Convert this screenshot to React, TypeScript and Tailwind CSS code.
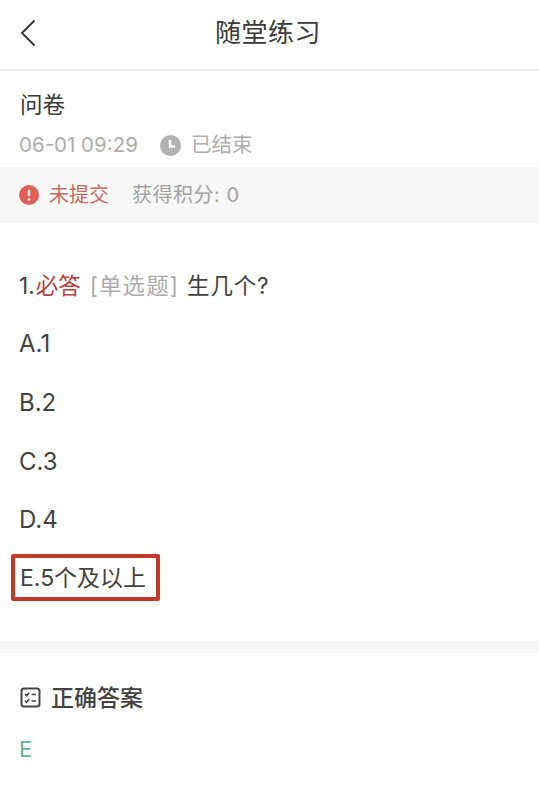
const font = { fontFamily: 'Inter, "Noto Sans CJK SC", "Noto Sans", sans-serif' }

function Option({ label }: { label: string }) {
  return <div className="h-[58.7px] flex items-center text-[24px] text-[#424242]">{label}</div>
}

export default function App() {
  return (
    <div className="w-[539px] h-[800px] bg-white overflow-hidden" style={font}>
      <header className="relative h-[71px] pb-[5px] border-b-2 border-[#eeeeee] flex items-center justify-center">
        <svg className="absolute left-[20px] top-[19px]" width="16" height="28" viewBox="0 0 16 28" fill="none" stroke="#3a3a3a" strokeWidth="2">
          <path d="M14.5 1.5L2 14l12.5 12.5" />
        </svg>
        <span className="text-[26px] text-[#3a3a3a] tracking-[0.5px] -ml-[3px]">随堂练习</span>
      </header>

      <div className="px-[20px] pt-[17px] h-[96px]">
        <div className="text-[22.5px] leading-[34px] text-[#3a3a3a]">问卷</div>
        <div className="mt-[7px] flex items-center text-[20.5px] leading-[32px] text-[#adadad]">
          <span className="-ml-[1px]">06-01 09:29</span>
          <svg className="ml-[22px]" width="21" height="21" viewBox="0 0 21 21">
            <circle cx="10.5" cy="10.5" r="10.5" fill="#b2b2b2" />
            <path d="M10 5v6.5h5" fill="none" stroke="#ffffff" strokeWidth="2.4" />
          </svg>
          <span className="ml-[10px]">已结束</span>
        </div>
      </div>

      <div className="h-[56px] bg-[#f7f7f7] px-[19px] flex items-center text-[20px]">
        <svg width="20" height="20" viewBox="0 0 20 20">
          <circle cx="10" cy="10" r="10" fill="#dd5f58" />
          <rect x="8.7" y="4.5" width="2.6" height="7" rx="1.3" fill="#f7dcda" />
          <circle cx="10" cy="14.4" r="1.4" fill="#f7dcda" />
        </svg>
        <span className="ml-[10px] text-[#c9695f]">未提交</span>
        <span className="ml-[23px] text-[#a3a3a3] tracking-[0.5px]">获得积分: 0</span>
      </div>

      <div className="px-[19px] pt-[33px]">
        <div className="h-[59px] flex items-center text-[22.5px] text-[#424242]">
          <span>1.</span>
          <span className="ml-[1px] text-[#b5413f]">必答</span>
          <span className="ml-[9px] text-[#ababab] tracking-[1.1px]">[单选题]</span>
          <span className="ml-[8px] tracking-[0.8px]">生几个?</span>
        </div>
        <Option label="A.1" />
        <Option label="B.2" />
        <Option label="C.3" />
        <Option label="D.4" />
        <div className="mt-[4px] -ml-[8px] w-[149px] h-[47px] border-4 border-[#c0392b] rounded-[2px] flex items-center pl-[5px] pt-[1px] text-[23px] text-[#424242] whitespace-nowrap">
          E.5个及以上
        </div>
      </div>

      <div className="mt-[40px] h-[12px] bg-[#f5f5f5]" />

      <div className="px-[20px] pt-[27px]">
        <div className="flex items-center text-[23px] font-medium text-[#424242] leading-[36px]">
          <svg width="21" height="21" viewBox="0 0 21 21" fill="none" stroke="#444444" strokeWidth="2">
            <rect x="1.5" y="1.5" width="18" height="18" rx="2.5" />
            <path d="M5 7.2l1.6 1.6 2.6-3M5 13.7l1.6 1.6 2.6-3M11.5 7.5h4.5M11.5 14h4.5" strokeWidth="1.7" />
          </svg>
          <span className="ml-[10px]">正确答案</span>
        </div>
        <div className="mt-[18px] -ml-[1px] text-[22px] text-[#5eb59a] leading-[30px]">E</div>
      </div>
    </div>
  )
}
